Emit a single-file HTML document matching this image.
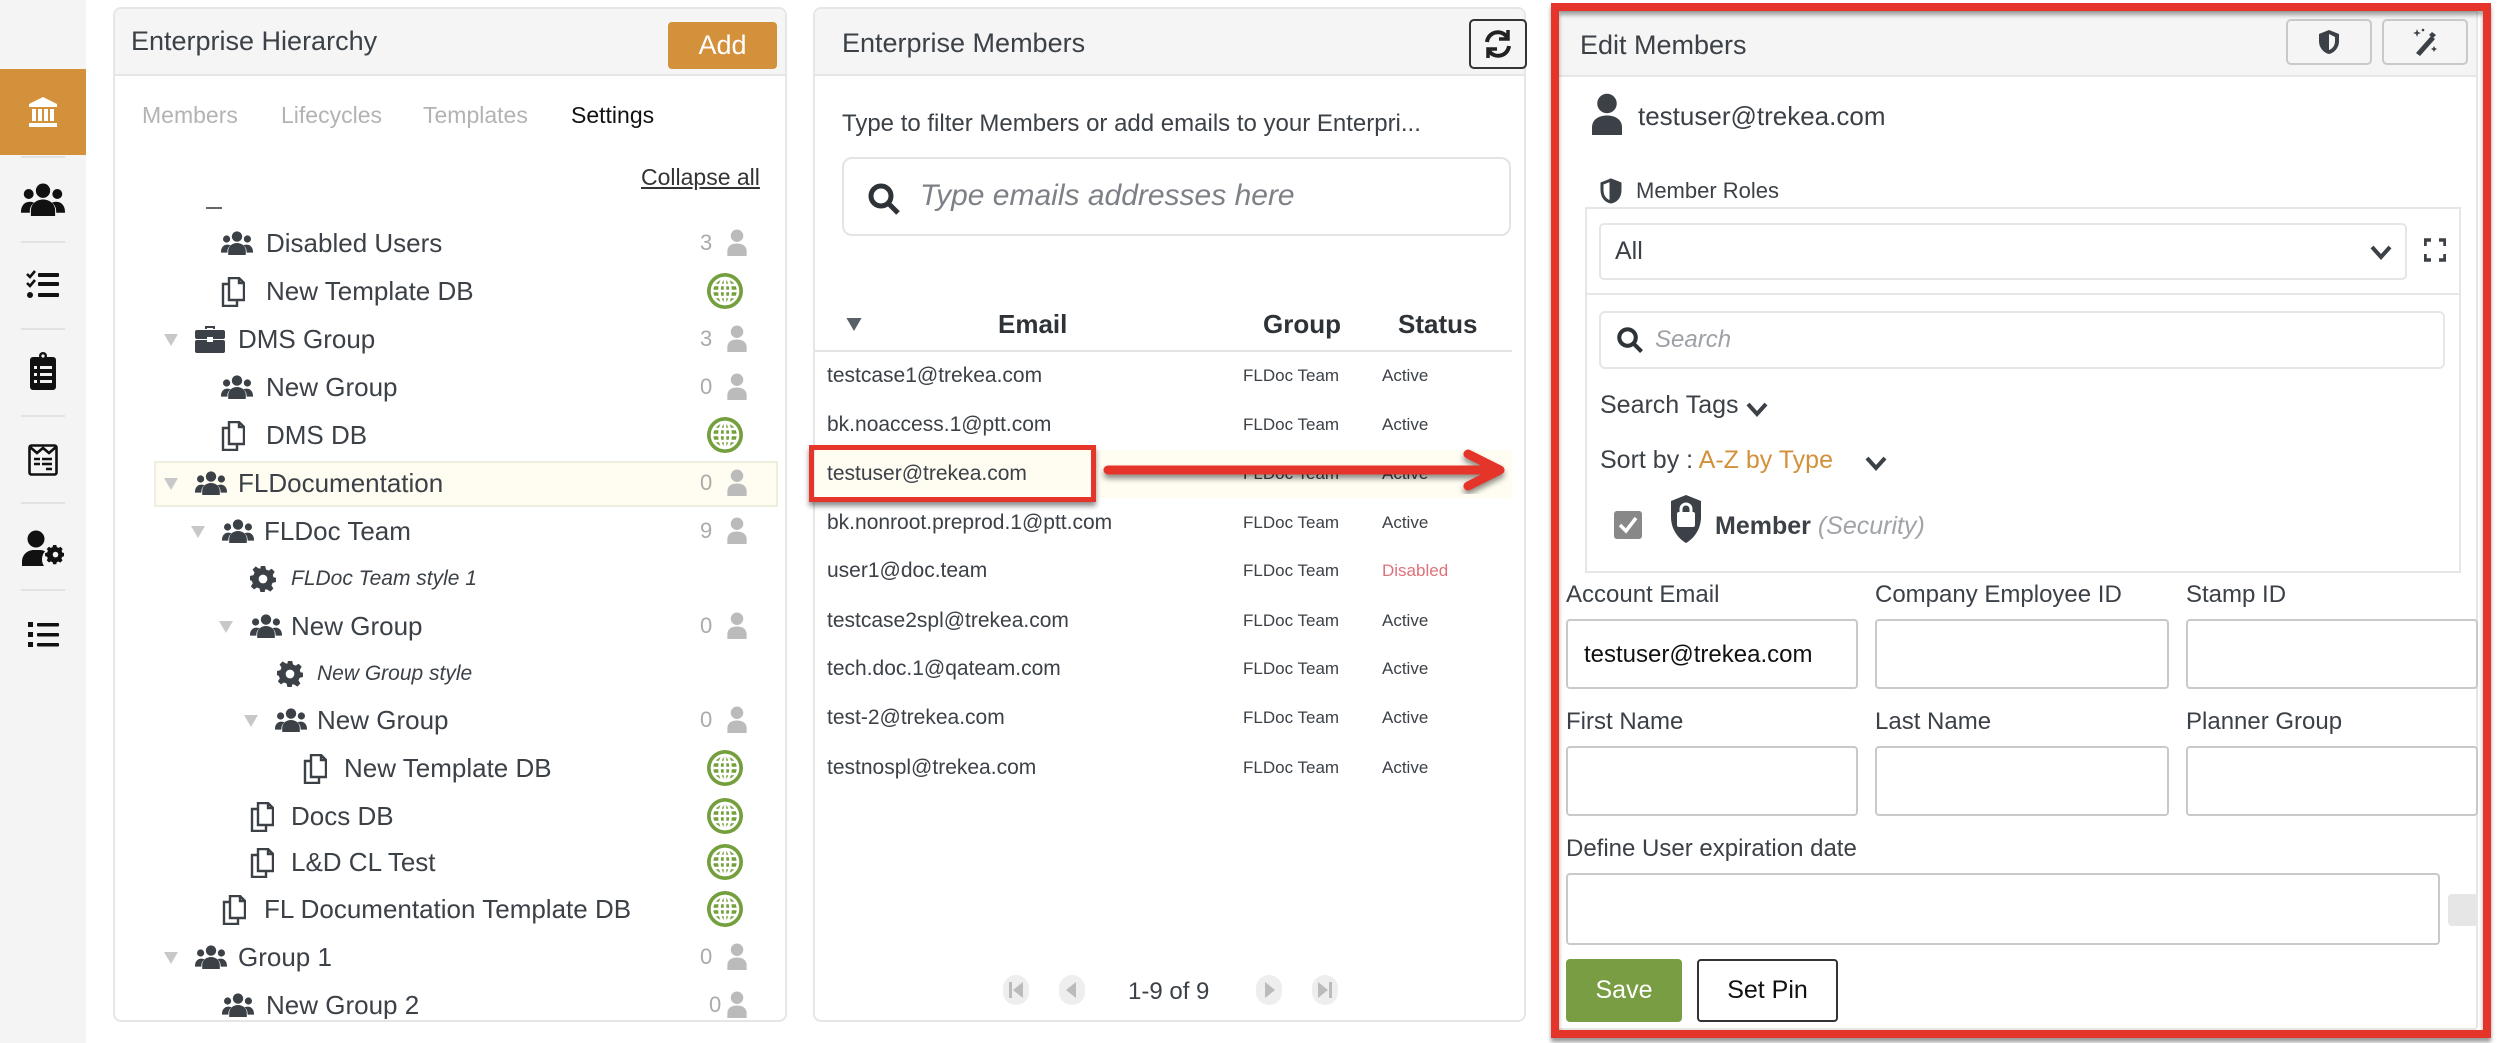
<!DOCTYPE html>
<html><head><meta charset="utf-8">
<style>
*{box-sizing:border-box;margin:0;padding:0}
html,body{width:2500px;height:1043px;overflow:hidden}
body{background:#fff;font-family:"Liberation Sans",sans-serif;color:#3b4147;position:relative}
.a{position:absolute;white-space:nowrap}
.panel{position:absolute;border:2px solid #e6e6e6;border-radius:8px;background:#fff}
.hdr{position:absolute;left:0;right:0;top:0;height:67px;background:#f5f5f5;border-bottom:2px solid #e6e6e6;border-radius:6px 6px 0 0}
.t{position:absolute;white-space:nowrap;line-height:48px;height:48px;font-size:26px;color:#3b4147}
.cnt{position:absolute;left:700px;width:20px;font-size:22px;color:#aaa;line-height:48px;height:48px}
.sep{position:absolute;left:21px;width:44px;height:2px;background:#e2e2e2}
.side svg{position:absolute}
.lbl{position:absolute;font-size:24px;color:#3b4147;white-space:nowrap}
.inp{position:absolute;border:2px solid #c9c9c9;border-radius:4px;background:#fff}
</style></head><body>
<svg width="0" height="0" style="position:absolute">
<defs>
<symbol id="users" viewBox="0 0 40 30"><circle cx="20" cy="7" r="6.5"/><circle cx="7" cy="10" r="4.5"/><circle cx="33" cy="10" r="4.5"/><path d="M9 30v-5c0-6 5-10 11-10s11 4 11 10v5z"/><path d="M0 26c0-5 3-9 8-9 2 0 3 .5 4 1-3 2-4 5-4 8v1H0z"/><path d="M40 26c0-5-3-9-8-9-2 0-3 .5-4 1 3 2 4 5 4 8v1h8z"/></symbol>
<symbol id="copy" viewBox="0 0 24 30"><path d="M8 1h10l5 5v17H8z" fill="none" stroke="currentColor" stroke-width="2.4"/><path d="M18 1v5h5" fill="none" stroke="currentColor" stroke-width="2.4"/><path d="M8 7H2v22h14v-6" fill="none" stroke="currentColor" stroke-width="2.4"/></symbol>
<symbol id="globe" viewBox="0 0 36 36"><circle cx="18" cy="18" r="18" fill="#73a03c"/><circle cx="18" cy="18" r="13" fill="none" stroke="#fff" stroke-width="2.6"/><ellipse cx="18" cy="18" rx="5.5" ry="13" fill="none" stroke="#fff" stroke-width="2.6"/><path d="M18 5v26M5 18h26M7 12h22M7 24h22" stroke="#fff" stroke-width="2.6"/></symbol>
<symbol id="person" viewBox="0 0 20 28"><circle cx="10" cy="7" r="6.5"/><path d="M0 28v-5c0-5 4-8 10-8s10 3 10 8v5z"/></symbol>
<symbol id="gear" viewBox="0 0 30 30"><path d="M12.5 0h5l1 4 3 1.4 3.5-2.2 3.5 3.5-2.2 3.5L27 13l3 .5v5l-4 1-1.2 3 2.2 3.5-3.5 3.5-3.5-2.2L17.5 27l-.5 3h-5l-1-4-3-1.2-3.5 2.2-3.5-3.5 2.2-3.5L2 17l-2-.5v-5l4-1 1.2-3-2.2-3.5 3.5-3.5 3.5 2.2L12 3z"/><circle cx="15" cy="15" r="5" fill="#fff"/></symbol>
<symbol id="tri" viewBox="0 0 14 12"><path d="M0 0h14L7 12z"/></symbol>
</defs></svg>

<!-- sidebar -->
<div class="a side" style="left:0;top:0;width:86px;height:1043px;background:#f4f4f4">
 <div class="a" style="left:0;top:69px;width:86px;height:86px;background:#d2913a"></div>
 <svg style="left:27px;top:96px" width="32" height="32" viewBox="0 0 32 32" fill="#fff"><path d="M16 1L2 8v3h28V8z"/><rect x="5" y="13" width="4" height="12"/><rect x="11" y="13" width="4" height="12"/><rect x="17" y="13" width="4" height="12"/><rect x="23" y="13" width="4" height="12"/><rect x="2" y="27" width="28" height="4"/></svg>
 <div class="sep" style="top:156px"></div>
 <svg style="left:21px;top:183px" width="44" height="33" fill="#111"><use href="#users"/></svg>
 <div class="sep" style="top:241px"></div>
 <svg style="left:26px;top:270px" width="34" height="30" viewBox="0 0 34 30" fill="#111"><path d="M1 4l3 3 5-6" stroke="#111" stroke-width="2.6" fill="none"/><path d="M1 13l3 3 5-6" stroke="#111" stroke-width="2.6" fill="none"/><circle cx="4" cy="25" r="3"/><rect x="12" y="3" width="21" height="4" rx="1"/><rect x="12" y="12" width="21" height="4" rx="1"/><rect x="12" y="23" width="21" height="4" rx="1"/></svg>
 <div class="sep" style="top:328px"></div>
 <svg style="left:30px;top:352px" width="26" height="38" viewBox="0 0 26 38"><rect x="0" y="5" width="26" height="33" rx="3" fill="#111"/><circle cx="13" cy="4" r="4" fill="#111"/><circle cx="13" cy="4" r="1.6" fill="#f4f4f4"/><g fill="#f4f4f4"><rect x="4" y="14" width="3" height="3"/><rect x="10" y="14" width="12" height="3"/><rect x="4" y="21" width="3" height="3"/><rect x="10" y="21" width="12" height="3"/><rect x="4" y="28" width="3" height="3"/><rect x="10" y="28" width="12" height="3"/></g></svg>
 <div class="sep" style="top:415px"></div>
 <svg style="left:28px;top:444px" width="30" height="32" viewBox="0 0 30 32" fill="none" stroke="#111" stroke-width="2.6"><rect x="1.5" y="1.5" width="27" height="29" rx="2"/><path d="M2 3l7 6 6-5 6 5 7-6"/><path d="M6 15h6M14 15h10M6 20h6M14 20h10M18 25h6" stroke-width="2.4"/></svg>
 <div class="sep" style="top:502px"></div>
 <svg style="left:22px;top:530px" width="42" height="36" viewBox="0 0 42 36" fill="#111"><circle cx="14" cy="9" r="8.5"/><path d="M0 36v-4c0-7 5-12 12-12h6c2 0 4 .5 5 1.5-2 2-3 5-3 8 0 3 1 5 2 6.5z"/><g transform="translate(24,18)"><path d="M7 0h4l.7 2.6 2.2 1 2.3-1.4 2.8 2.8-1.4 2.3 1 2.2L21 10v4l-2.6.7-1 2.2 1.4 2.3-2.8 2.8-2.3-1.4-2.2 1L11 24H7l-.7-2.6-2.2-1-2.3 1.4L-1 19l1.4-2.3-1-2.2L-3 14v-4l2.6-.7 1-2.2L-1 5l2.8-2.8 2.3 1.4 2.2-1z" transform="translate(1.5,-3) scale(0.8)"/><circle cx="9.5" cy="6.6" r="2.8" fill="#f4f4f4"/></g></svg>
 <div class="sep" style="top:589px"></div>
 <svg style="left:28px;top:622px" width="32" height="26" viewBox="0 0 32 26" fill="#111"><rect x="0" y="0" width="5" height="5"/><rect x="0" y="10" width="5" height="5"/><rect x="0" y="20" width="5" height="5"/><rect x="9" y="1" width="22" height="3.5" rx="1"/><rect x="9" y="11" width="22" height="3.5" rx="1"/><rect x="9" y="21" width="22" height="3.5" rx="1"/></svg>
</div>

<!-- panel 1 -->
<div class="panel" style="left:113px;top:7px;width:674px;height:1015px">
 <div class="hdr"></div>
 <div class="a" style="left:16px;top:17px;font-size:27px;color:#3b4147">Enterprise Hierarchy</div>
 <div class="a" style="left:553px;top:13px;width:109px;height:47px;background:#d2913a;border-radius:4px;color:#fff;font-size:27px;text-align:center;line-height:47px">Add</div>
 <div class="a" style="left:27px;top:93px;font-size:23px;color:#b3b3b3">Members</div>
 <div class="a" style="left:166px;top:93px;font-size:23px;color:#b3b3b3">Lifecycles</div>
 <div class="a" style="left:308px;top:93px;font-size:23px;color:#b3b3b3">Templates</div>
 <div class="a" style="left:456px;top:93px;font-size:23px;color:#111">Settings</div>
 <div class="a" style="left:526px;top:155px;font-size:23px;color:#333;text-decoration:underline">Collapse all</div>
 <div class="a" style="left:91px;top:198px;width:16px;height:2px;background:#666"></div>
 <div class="a" style="left:39px;top:452px;width:624px;height:46px;background:#fffdf2;border:2px solid #efefe0"></div>
</div>
<div class="a" style="left:0;top:0">
 <svg class="a" style="left:221px;top:231px" width="32" height="24" fill="#3b4147"><use href="#users"/></svg><div class="t" style="left:266px;top:219px">Disabled Users</div><div class="cnt" style="top:219px">3</div><svg class="a" style="left:727px;top:229px" width="20" height="27" fill="#bbb"><use href="#person"/></svg>
 <svg class="a" style="left:221px;top:277px" width="24" height="30" color="#3b4147"><use href="#copy"/></svg><div class="t" style="left:266px;top:267px">New Template DB</div><svg class="a" style="left:707px;top:273px" width="36" height="36"><use href="#globe"/></svg>
 <svg class="a" style="left:164px;top:334px" width="14" height="12" fill="#c8c8c8"><use href="#tri"/></svg><svg class="a" style="left:195px;top:325px" width="30" height="28" viewBox="0 0 30 28" fill="#3b4147"><path d="M10 4V1h10v3h-2V3h-6v1z"/><rect x="0" y="5" width="30" height="9" rx="2"/><rect x="0" y="15" width="30" height="13" rx="2"/><rect x="12" y="12" width="6" height="5" fill="#fff"/></svg><div class="t" style="left:238px;top:315px">DMS Group</div><div class="cnt" style="top:315px">3</div><svg class="a" style="left:727px;top:325px" width="20" height="27" fill="#bbb"><use href="#person"/></svg>
 <svg class="a" style="left:221px;top:375px" width="32" height="24" fill="#3b4147"><use href="#users"/></svg><div class="t" style="left:266px;top:363px">New Group</div><div class="cnt" style="top:363px">0</div><svg class="a" style="left:727px;top:373px" width="20" height="27" fill="#bbb"><use href="#person"/></svg>
 <svg class="a" style="left:221px;top:421px" width="24" height="30" color="#3b4147"><use href="#copy"/></svg><div class="t" style="left:266px;top:411px">DMS DB</div><svg class="a" style="left:707px;top:417px" width="36" height="36"><use href="#globe"/></svg>
 <svg class="a" style="left:164px;top:478px" width="14" height="12" fill="#c8c8c8"><use href="#tri"/></svg><svg class="a" style="left:195px;top:471px" width="32" height="24" fill="#3b4147"><use href="#users"/></svg><div class="t" style="left:238px;top:459px">FLDocumentation</div><div class="cnt" style="top:459px">0</div><svg class="a" style="left:727px;top:469px" width="20" height="27" fill="#bbb"><use href="#person"/></svg>
 <svg class="a" style="left:191px;top:526px" width="14" height="12" fill="#c8c8c8"><use href="#tri"/></svg><svg class="a" style="left:222px;top:519px" width="32" height="24" fill="#3b4147"><use href="#users"/></svg><div class="t" style="left:264px;top:507px">FLDoc Team</div><div class="cnt" style="top:507px">9</div><svg class="a" style="left:727px;top:517px" width="20" height="27" fill="#bbb"><use href="#person"/></svg>
 <svg class="a" style="left:250px;top:566px" width="26" height="26" fill="#3b4147"><use href="#gear"/></svg><div class="t" style="left:291px;top:555px;font-style:italic;font-size:21px">FLDoc Team style 1</div>
 <svg class="a" style="left:219px;top:621px" width="14" height="12" fill="#c8c8c8"><use href="#tri"/></svg><svg class="a" style="left:250px;top:614px" width="32" height="24" fill="#3b4147"><use href="#users"/></svg><div class="t" style="left:291px;top:602px">New Group</div><div class="cnt" style="top:602px">0</div><svg class="a" style="left:727px;top:612px" width="20" height="27" fill="#bbb"><use href="#person"/></svg>
 <svg class="a" style="left:277px;top:661px" width="26" height="26" fill="#3b4147"><use href="#gear"/></svg><div class="t" style="left:317px;top:650px;font-style:italic;font-size:21px">New Group style</div>
 <svg class="a" style="left:244px;top:715px" width="14" height="12" fill="#c8c8c8"><use href="#tri"/></svg><svg class="a" style="left:275px;top:708px" width="32" height="24" fill="#3b4147"><use href="#users"/></svg><div class="t" style="left:317px;top:696px">New Group</div><div class="cnt" style="top:696px">0</div><svg class="a" style="left:727px;top:706px" width="20" height="27" fill="#bbb"><use href="#person"/></svg>
 <svg class="a" style="left:303px;top:754px" width="24" height="30" color="#3b4147"><use href="#copy"/></svg><div class="t" style="left:344px;top:744px">New Template DB</div><svg class="a" style="left:707px;top:750px" width="36" height="36"><use href="#globe"/></svg>
 <svg class="a" style="left:250px;top:802px" width="24" height="30" color="#3b4147"><use href="#copy"/></svg><div class="t" style="left:291px;top:792px">Docs DB</div><svg class="a" style="left:707px;top:798px" width="36" height="36"><use href="#globe"/></svg>
 <svg class="a" style="left:250px;top:848px" width="24" height="30" color="#3b4147"><use href="#copy"/></svg><div class="t" style="left:291px;top:838px">L&amp;D CL Test</div><svg class="a" style="left:707px;top:844px" width="36" height="36"><use href="#globe"/></svg>
 <svg class="a" style="left:222px;top:895px" width="24" height="30" color="#3b4147"><use href="#copy"/></svg><div class="t" style="left:264px;top:885px">FL Documentation Template DB</div><svg class="a" style="left:707px;top:891px" width="36" height="36"><use href="#globe"/></svg>
 <svg class="a" style="left:164px;top:952px" width="14" height="12" fill="#c8c8c8"><use href="#tri"/></svg><svg class="a" style="left:195px;top:945px" width="32" height="24" fill="#3b4147"><use href="#users"/></svg><div class="t" style="left:238px;top:933px">Group 1</div><div class="cnt" style="top:933px">0</div><svg class="a" style="left:727px;top:943px" width="20" height="27" fill="#bbb"><use href="#person"/></svg>
 <div class="a" style="left:115px;top:990px;width:670px;height:29px;overflow:hidden">
  <svg class="a" style="left:107px;top:3px" width="32" height="24" fill="#3b4147"><use href="#users"/></svg><div class="t" style="left:151px;top:-9px">New Group 2</div><div class="cnt" style="left:594px;top:-9px">0</div><svg class="a" style="left:612px;top:1px" width="20" height="27" fill="#bbb"><use href="#person"/></svg>
 </div>
</div>

<!-- panel 2 -->
<div class="panel" style="left:813px;top:7px;width:713px;height:1015px">
 <div class="hdr"></div>
 <div class="a" style="left:27px;top:19px;font-size:27px">Enterprise Members</div>
 <div class="a" style="left:654px;top:10px;width:58px;height:50px;border:2px solid #333;border-radius:5px;background:#f5f5f5"></div>
 <svg class="a" style="left:668px;top:19px" width="30" height="32" viewBox="0 0 30 32" fill="none" stroke="#222" stroke-width="4"><path d="M4 14A11 11 0 0 1 24 9"/><path d="M26 18A11 11 0 0 1 6 23"/><path d="M25 2v9h-9" stroke-width="3.5"/><path d="M5 30v-9h9" stroke-width="3.5"/></svg>
 <div class="a" style="left:27px;top:101px;font-size:24px">Type to filter Members or add emails to your Enterpri...</div>
 <div class="a" style="left:27px;top:148px;width:669px;height:79px;border:2px solid #e4e4e4;border-radius:10px"></div>
 <svg class="a" style="left:52px;top:173px" width="34" height="34" viewBox="0 0 34 34" fill="none" stroke="#2e3338" stroke-width="5"><circle cx="14" cy="14" r="10"/><path d="M21 21l10 10"/></svg>
 <div class="a" style="left:105px;top:170px;font-size:30px;font-style:italic;color:#7d8187">Type emails addresses here</div>
 <svg class="a" style="left:31px;top:309px" width="16" height="13" fill="#5a6068"><use href="#tri"/></svg>
 <div class="a" style="left:183px;top:300px;font-size:26px;font-weight:bold;color:#2e3338">Email</div>
 <div class="a" style="left:448px;top:300px;font-size:26px;font-weight:bold;color:#2e3338">Group</div>
 <div class="a" style="left:583px;top:300px;font-size:26px;font-weight:bold;color:#2e3338">Status</div>
 <div class="a" style="left:0;top:341px;width:697px;height:2px;background:#e4e4e4"></div>
 <div class="a" style="left:0;top:441px;width:697px;height:48px;background:#fffdf2"></div>
</div>
<div class="a" style="left:0;top:0;font-size:21px">
 <div class="a" style="left:827px;top:364px">testcase1@trekea.com</div><div class="a" style="left:1243px;top:366px;font-size:17px">FLDoc Team</div><div class="a" style="left:1382px;top:366px;font-size:17px">Active</div>
 <div class="a" style="left:827px;top:413px">bk.noaccess.1@ptt.com</div><div class="a" style="left:1243px;top:415px;font-size:17px">FLDoc Team</div><div class="a" style="left:1382px;top:415px;font-size:17px">Active</div>
 <div class="a" style="left:827px;top:462px">testuser@trekea.com</div><div class="a" style="left:1243px;top:464px;font-size:17px">FLDoc Team</div><div class="a" style="left:1382px;top:464px;font-size:17px">Active</div>
 <div class="a" style="left:827px;top:511px">bk.nonroot.preprod.1@ptt.com</div><div class="a" style="left:1243px;top:513px;font-size:17px">FLDoc Team</div><div class="a" style="left:1382px;top:513px;font-size:17px">Active</div>
 <div class="a" style="left:827px;top:559px">user1@doc.team</div><div class="a" style="left:1243px;top:561px;font-size:17px">FLDoc Team</div><div class="a" style="left:1382px;top:561px;font-size:17px;color:#e0707a">Disabled</div>
 <div class="a" style="left:827px;top:609px">testcase2spl@trekea.com</div><div class="a" style="left:1243px;top:611px;font-size:17px">FLDoc Team</div><div class="a" style="left:1382px;top:611px;font-size:17px">Active</div>
 <div class="a" style="left:827px;top:657px">tech.doc.1@qateam.com</div><div class="a" style="left:1243px;top:659px;font-size:17px">FLDoc Team</div><div class="a" style="left:1382px;top:659px;font-size:17px">Active</div>
 <div class="a" style="left:827px;top:706px">test-2@trekea.com</div><div class="a" style="left:1243px;top:708px;font-size:17px">FLDoc Team</div><div class="a" style="left:1382px;top:708px;font-size:17px">Active</div>
 <div class="a" style="left:827px;top:756px">testnospl@trekea.com</div><div class="a" style="left:1243px;top:758px;font-size:17px">FLDoc Team</div><div class="a" style="left:1382px;top:758px;font-size:17px">Active</div>
</div>
<!-- red highlight & arrow -->
<div class="a" style="left:809px;top:445px;width:287px;height:57px;border:5px solid #e5342a;box-shadow:0 4px 5px rgba(0,0,0,.45)"></div>
<svg class="a" style="left:1100px;top:448px" width="410" height="46" viewBox="0 0 410 46"><g filter="drop-shadow(0 4px 3px rgba(0,0,0,.45))"><path d="M8 22h390" stroke="#e5342a" stroke-width="9" stroke-linecap="round"/><path d="M368 6l32 16-32 16" fill="none" stroke="#e5342a" stroke-width="9" stroke-linecap="round" stroke-linejoin="round"/></g></svg>
<!-- pagination -->
<div class="a" style="left:0;top:0">
 <div class="a" style="left:1003px;top:975px;width:26px;height:30px;border-radius:13px;background:#eee"></div><svg class="a" style="left:1009px;top:982px" width="14" height="16" fill="#bbb"><rect x="0" y="0" width="3" height="16"/><path d="M14 0v16L4 8z"/></svg>
 <div class="a" style="left:1059px;top:975px;width:26px;height:30px;border-radius:13px;background:#eee"></div><svg class="a" style="left:1066px;top:982px" width="12" height="16" fill="#bbb"><path d="M10 0v16L0 8z"/></svg>
 <div class="a" style="left:1128px;top:978px;font-size:24px;color:#3b4147">1-9 of 9</div>
 <div class="a" style="left:1256px;top:975px;width:26px;height:30px;border-radius:13px;background:#eee"></div><svg class="a" style="left:1265px;top:982px" width="12" height="16" fill="#bbb"><path d="M0 0v16l10-8z"/></svg>
 <div class="a" style="left:1312px;top:975px;width:26px;height:30px;border-radius:13px;background:#eee"></div><svg class="a" style="left:1318px;top:982px" width="14" height="16" fill="#bbb"><path d="M0 0v16l10-8z"/><rect x="11" y="0" width="3" height="16"/></svg>
</div>

<!-- panel 3 -->
<div class="panel" style="left:1556px;top:10px;width:922px;height:1020px;border-radius:4px">
 <div class="hdr" style="height:65px"></div>
 <div class="a" style="left:22px;top:18px;font-size:27px">Edit Members</div>
 <div class="a" style="left:728px;top:7px;width:86px;height:46px;border:2px solid #c9c9c9;border-radius:5px;background:#f5f5f5"></div>
 <svg class="a" style="left:760px;top:17px" width="22" height="26" viewBox="0 0 22 26"><path d="M11 1L1 5v7c0 7 5 12 10 13 5-1 10-6 10-13V5z" fill="#3b4147"/><path d="M11 5v16c3-1 6-4 6-9V8z" fill="#f5f5f5"/></svg>
 <div class="a" style="left:824px;top:7px;width:86px;height:46px;border:2px solid #c9c9c9;border-radius:5px;background:#f5f5f5"></div>
 <svg class="a" style="left:852px;top:15px" width="30" height="30" viewBox="0 0 30 30" fill="#3b4147"><path d="M6 26l15-17 4 3-15 17z"/><path d="M19 8l3-3 4 3-3 3z"/><path d="M7 2l1 3 3 1-3 1-1 3-1-3-3-1 3-1z"/><path d="M24 19l1 2 2 1-2 1-1 2-1-2-2-1 2-1z"/><circle cx="13" cy="3" r="1.3"/></svg>
 <svg class="a" style="left:30px;top:81px" width="38" height="42" fill="#3b4147" viewBox="0 0 20 28"><use href="#person"/></svg>
 <div class="a" style="left:80px;top:89px;font-size:26px">testuser@trekea.com</div>
 <svg class="a" style="left:42px;top:165px" width="22" height="28" viewBox="0 0 22 26" fill="none" stroke="#3b4147" stroke-width="3"><path d="M11 2L2 5.5v6.5c0 7 4 11 9 12 5-1 9-5 9-12V5.5z"/><path d="M11 3v20c3-1 7-5 7-11V7z" fill="#3b4147"/></svg>
 <div class="a" style="left:78px;top:166px;font-size:22px">Member Roles</div>
 <div class="a" style="left:27px;top:195px;width:876px;height:366px;border:2px solid #e6e6e6"></div>
 <div class="a" style="left:27px;top:281px;width:876px;height:2px;background:#e6e6e6"></div>
 <div class="a" style="left:41px;top:211px;width:808px;height:57px;border:2px solid #e6e6e6;border-radius:5px"></div>
 <div class="a" style="left:57px;top:225px;font-size:25px">All</div>
 <svg class="a" style="left:812px;top:233px" width="22" height="15" fill="none" stroke="#3b4147" stroke-width="4"><path d="M2 2l9 10 9-10"/></svg>
 <svg class="a" style="left:866px;top:226px" width="22" height="24" fill="none" stroke="#3b4147" stroke-width="3.5"><path d="M1 8V2h6M15 2h6v6M21 16v6h-6M7 22H1v-6"/></svg>
 <div class="a" style="left:41px;top:299px;width:846px;height:58px;border:2px solid #e6e6e6;border-radius:6px"></div>
 <svg class="a" style="left:58px;top:313px" width="28" height="30" viewBox="0 0 34 34" fill="none" stroke="#2e3338" stroke-width="5"><circle cx="14" cy="14" r="10"/><path d="M21 21l10 10"/></svg>
 <div class="a" style="left:97px;top:314px;font-size:24px;font-style:italic;color:#9da1a6">Search</div>
 <div class="a" style="left:42px;top:379px;font-size:25px">Search Tags</div>
 <svg class="a" style="left:188px;top:390px" width="22" height="15" fill="none" stroke="#3b4147" stroke-width="4"><path d="M2 2l9 10 9-10"/></svg>
 <div class="a" style="left:42px;top:434px;font-size:25px">Sort by : <span style="color:#d2913a">A-Z by Type</span></div>
 <svg class="a" style="left:307px;top:444px" width="22" height="15" fill="none" stroke="#3b4147" stroke-width="4"><path d="M2 2l9 10 9-10"/></svg>
 <div class="a" style="left:56px;top:499px;width:28px;height:28px;background:#888;border-radius:3px"></div>
 <svg class="a" style="left:60px;top:504px" width="20" height="18" fill="none" stroke="#fff" stroke-width="3.5"><path d="M2 9l6 6 10-13"/></svg>
 <svg class="a" style="left:113px;top:482px" width="30" height="50" viewBox="0 0 30 48"><path d="M15 0L0 6v16c0 13 8 22 15 26 7-4 15-13 15-26V6z" fill="#3b4147"/><rect x="6" y="17" width="18" height="15" rx="2" fill="#fff"/><path d="M10 18v-4a5 5 0 0 1 10 0v4" fill="none" stroke="#fff" stroke-width="3"/></svg>
 <div class="a" style="left:157px;top:500px;font-size:25px;font-weight:bold;color:#3b4147">Member <span style="font-weight:normal;font-style:italic;color:#a0a4a8">(Security)</span></div>
 <div class="lbl" style="left:8px;top:569px">Account Email</div>
 <div class="lbl" style="left:317px;top:569px">Company Employee ID</div>
 <div class="lbl" style="left:628px;top:569px">Stamp ID</div>
 <div class="inp" style="left:8px;top:607px;width:292px;height:70px"><span class="a" style="left:16px;top:20px;font-size:24px;color:#111">testuser@trekea.com</span></div>
 <div class="inp" style="left:317px;top:607px;width:294px;height:70px"></div>
 <div class="inp" style="left:628px;top:607px;width:292px;height:70px"></div>
 <div class="lbl" style="left:8px;top:696px">First Name</div>
 <div class="lbl" style="left:317px;top:696px">Last Name</div>
 <div class="lbl" style="left:628px;top:696px">Planner Group</div>
 <div class="inp" style="left:8px;top:734px;width:292px;height:70px"></div>
 <div class="inp" style="left:317px;top:734px;width:294px;height:70px"></div>
 <div class="inp" style="left:628px;top:734px;width:292px;height:70px"></div>
 <div class="lbl" style="left:8px;top:823px">Define User expiration date</div>
 <div class="inp" style="left:8px;top:861px;width:874px;height:72px"></div>
 <div class="a" style="left:890px;top:882px;width:30px;height:32px;background:#e6e6e6;border-radius:4px"></div>
 <div class="a" style="left:8px;top:947px;width:116px;height:63px;background:#789d43;border-radius:4px;color:#fff;font-size:25px;text-align:center;line-height:63px">Save</div>
 <div class="a" style="left:139px;top:947px;width:141px;height:63px;border:2px solid #333;border-radius:4px;color:#111;font-size:25px;text-align:center;line-height:59px">Set Pin</div>
</div>
<!-- red frame -->
<div class="a" style="left:1551px;top:3px;width:940px;height:1035px;border:8px solid #e5342a;box-shadow:0 4px 4px rgba(0,0,0,.4), inset 0 4px 4px rgba(0,0,0,.35)"></div>
</body></html>
